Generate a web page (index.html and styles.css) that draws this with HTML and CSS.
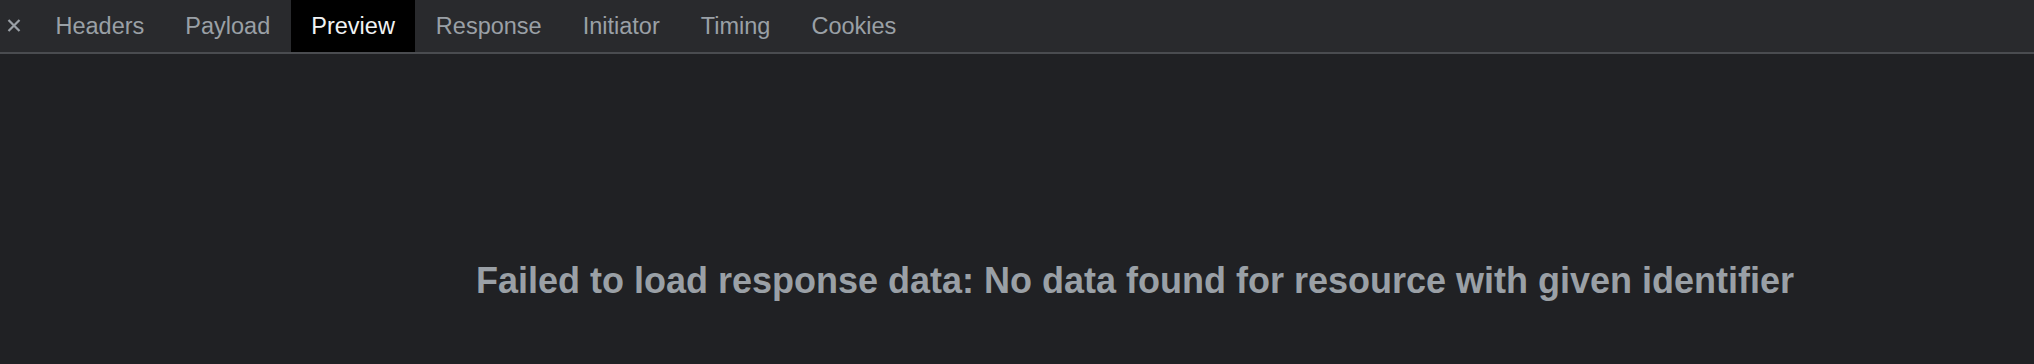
FILE: index.html
```html
<!DOCTYPE html>
<html>
<head>
<meta charset="utf-8">
<link rel="stylesheet" href="styles.css">
</head>
<body>
<div class="panel">
  <div class="tabbar">
    <div class="close">
      <svg width="14" height="13" viewBox="0 0 14 13"><path d="M1.5 1 L12.5 12 M12.5 1 L1.5 12" stroke="#9aa0a6" stroke-width="2.2" stroke-linecap="butt"/></svg>
    </div>
    <div class="tab">Headers</div>
    <div class="tab">Payload</div>
    <div class="tab active">Preview</div>
    <div class="tab">Response</div>
    <div class="tab">Initiator</div>
    <div class="tab">Timing</div>
    <div class="tab">Cookies</div>
  </div>
  <div class="content">
    <div class="message">Failed to load response data: No data found for resource with given identifier</div>
  </div>
</div>
</body>
</html>
```

FILE: styles.css
```css
html, body {
  margin: 0;
  padding: 0;
  background: #202124;
  width: 2034px;
  height: 364px;
  overflow: hidden;
}
.panel {
  display: flex;
  flex-direction: column;
  height: 364px;
  font-family: "Liberation Sans", Arial, sans-serif;
}
.tabbar {
  display: flex;
  align-items: stretch;
  height: 52px;
  background: #292a2d;
  border-bottom: 2px solid #4a4c50;
}
.close {
  width: 28px;
  margin-right: 7px;
  display: flex;
  align-items: center;
  justify-content: center;
  padding-bottom: 1px;
}
.tab {
  display: flex;
  align-items: center;
  padding: 0 20.5px;
  font-size: 23.5px;
  color: #9aa0a6;
  padding-top: 1px;
}
.tab.active {
  background: #000000;
  color: #f1f3f4;
}
.content {
  flex: 1;
  display: flex;
  justify-content: center;
  padding-left: 236px;
  padding-top: 206px;
}
.message {
  font-size: 36px;
  font-weight: bold;
  color: #9aa0a6;
  line-height: 42px;
  height: 42px;
  white-space: nowrap;
}
```
